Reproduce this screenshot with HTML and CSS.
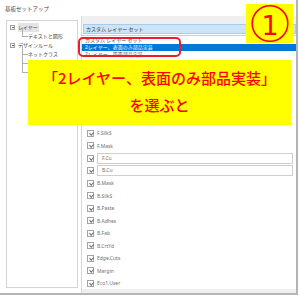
FILE: index.html
```html
<!DOCTYPE html>
<html lang="ja">
<head>
  <meta charset="UTF-8">
  <title>基板セットアップ</title>
  <link rel="stylesheet" href="styles.css">
</head>
<body>
  <div class="dialog">
    <div class="title">基板セットアップ</div>
    <div class="main">
      <div class="tree">
        <div class="node top"><span class="box"></span><span class="sel">レイヤー</span></div>
        <div class="node child">テキストと図形</div>
        <div class="node top"><span class="box"></span>デザインルール</div>
        <div class="node child">ネットクラス</div>
        <div class="node child"></div>
        <div class="node child"></div>
      </div>
      <div class="panel">
        <div class="band"></div>
        <div class="combo">カスタム レイヤー セット</div>
        <ul class="layers">
          <!-- rows under the open dropdown / callout -->
          <li class="layer"><span class="check"></span></li>
          <li class="layer"><span class="check"></span></li>
          <li class="layer"><span class="check"></span></li>
          <li class="layer"><span class="check"></span></li>
          <li class="layer"><span class="check"></span></li>
          <li class="layer"><span class="check"></span></li>
          <li class="layer"><span class="check"></span></li>
          <li class="layer"><span class="check"></span>F.SilkS</li>
          <li class="layer"><span class="check"></span>F.Mask</li>
          <li class="layer"><span class="check"></span><span class="field">F.Cu</span></li>
          <li class="layer"><span class="check"></span><span class="field">B.Cu</span></li>
          <li class="layer"><span class="check"></span>B.Mask</li>
          <li class="layer"><span class="check"></span>B.SilkS</li>
          <li class="layer"><span class="check"></span>B.Paste</li>
          <li class="layer"><span class="check"></span>B.Adhes</li>
          <li class="layer"><span class="check"></span>B.Fab</li>
          <li class="layer"><span class="check"></span>B.CrtYd</li>
          <li class="layer"><span class="check"></span>Edge.Cuts</li>
          <li class="layer"><span class="check"></span>Margin</li>
          <li class="layer"><span class="check"></span>Eco1.User</li>
        </ul>
        <div class="hbar"></div>
      </div>
    </div>

    <!-- open dropdown of the preset combo -->
    <div class="popup">
      <div class="opt">カスタム レイヤー セット</div>
      <div class="opt on">2レイヤー、表面のみ部品実装</div>
      <div class="opt">2レイヤー、両面部品実装</div>
    </div>
    <div class="ring"></div>

    <div class="callout">「2レイヤー、表面のみ部品実装」<br>を選ぶと</div>
    <div class="badge">
      <svg width="47" height="39" viewBox="0 0 47 39">
        <circle cx="24" cy="19.5" r="17.8" fill="none" stroke="#ff0000" stroke-width="1.6"/>
        <text x="24" y="31" text-anchor="middle" class="digit">1</text>
      </svg>
    </div>
  </div>
</body>
</html>
```
FILE: styles.css
```css
body { margin: 0; background: #fff; font-family: "Noto Sans", "Noto Sans CJK JP", sans-serif; }
.dialog { position: relative; width: 296px; height: 293px; border-right: 2px solid #b4b4b4; border-bottom: 2px solid #b4b4b4; background: #fff; }
.title { height: 16px; padding-left: 5px; font-size: 5.5px; line-height: 18px; color: #444; }
.main { display: flex; gap: 3px; height: 277px; padding-left: 6px; }

.tree { width: 72px; height: 268px; margin-top: 4px; box-sizing: border-box; border: 1px solid #d4d4d4; padding-top: 1.5px; }
.node { position: relative; height: 9px; line-height: 9px; font-size: 5px; color: #444; white-space: nowrap; }
.node.top { display: flex; align-items: center; padding-left: 3px; }
.box { position: relative; width: 5px; height: 5px; box-sizing: border-box; border: 1px solid #a0a0a0; margin-right: 3px; }
.box::after { content: ""; position: absolute; left: 0.5px; top: 1px; width: 2px; height: 1px; background: #666; }
.sel { background: #e4e4e4; padding-right: 1px; }
.node.child { padding-left: 21px; }
.node.child::before { content: ""; position: absolute; left: 15px; top: -4px; width: 5px; height: 8.5px; border-left: 1px solid #b0b0b0; border-bottom: 1px solid #b0b0b0; }

.panel { flex: 1; display: flex; flex-direction: column; border-left: 1px solid #d8d8d8; }
.band { height: 8px; background: #efefef; }
.combo { height: 10px; margin-left: 1px; box-sizing: border-box; border: 1px solid #a6cdee; background: #cce4f7; padding-left: 2px; font-size: 5px; line-height: 8px; color: #333; }
.layers { flex: 1; overflow: hidden; list-style: none; margin: 0; padding: 5.25px 0 0 5px; }
.layer { display: flex; align-items: center; height: 12.5px; font-size: 5px; color: #707070; }
.check { position: relative; flex: none; width: 7px; height: 7px; box-sizing: border-box; border: 1px solid #a4a4a4; margin-right: 3px; }
.check::after { content: ""; position: absolute; left: 1.6px; top: 0; width: 1.6px; height: 3.4px; border: solid #6a6a6a; border-width: 0 1px 1px 0; transform: rotate(45deg); }
.field { flex: 1; height: 11px; box-sizing: border-box; border: 1px solid #cfcfcf; margin-right: 3px; padding-left: 4px; line-height: 9px; }
.hbar { height: 4px; background: #efefef; }

.popup { position: absolute; left: 82px; top: 35px; width: 214px; height: 25px; box-sizing: border-box; border-top: 1px solid #cfcfcf; padding-top: 1px; background: #fff; font-size: 5px; }
.opt { height: 7px; line-height: 7px; padding-left: 3px; color: #555; white-space: nowrap; }
.opt.on { background: #0078d7; color: #fff; }
.ring { position: absolute; left: 78px; top: 37px; width: 103px; height: 20px; box-sizing: border-box; border: 2.5px solid #ee1c25; border-radius: 5px; }

.callout { position: absolute; left: 28px; top: 60px; width: 263px; height: 65px; box-sizing: border-box; padding-top: 3.5px; background: #ffff00; color: #ff0000; text-align: center; font-family: "Noto Sans CJK JP", sans-serif; font-size: 15px; font-weight: 500; line-height: 27px; }
.badge { position: absolute; left: 246px; top: 4px; width: 47px; height: 39px; background: #ffff00; }
.badge svg { display: block; }
.digit { font-family: "DejaVu Sans", sans-serif; font-size: 27px; fill: #ff0000; }
```
